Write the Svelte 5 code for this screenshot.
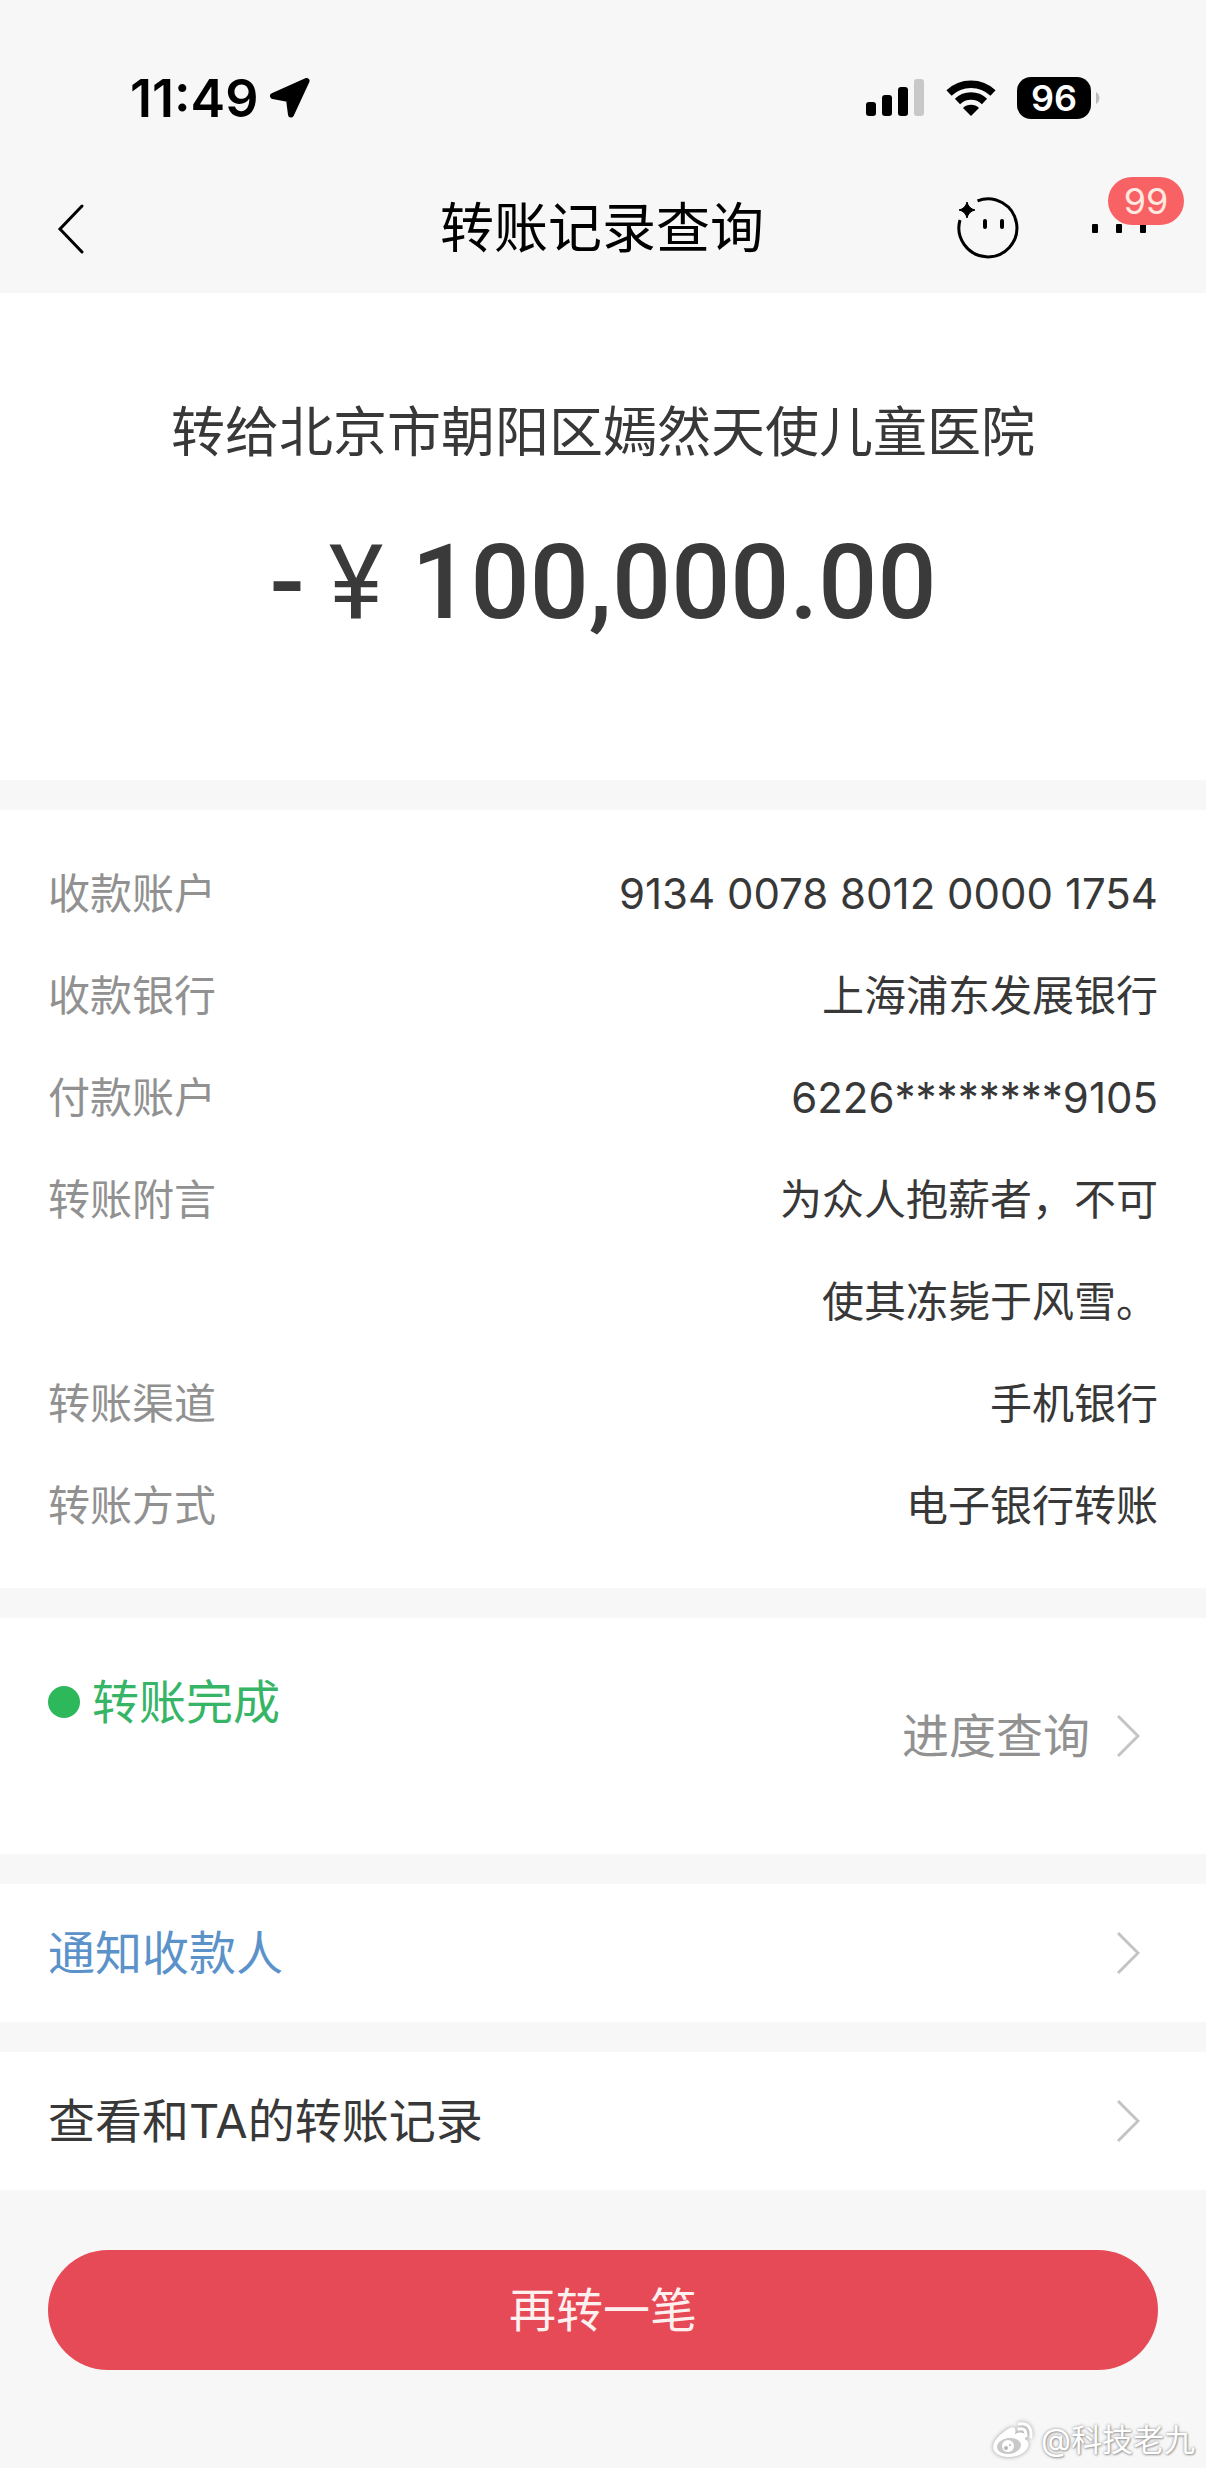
<script>
    const unread = 99;
    const battery = 96;

    const details = [
        { label: '收款账户', value: '9134 0078 8012 0000 1754' },
        { label: '收款银行', value: '上海浦东发展银行' },
        { label: '付款账户', value: '6226********9105' },
        { label: '转账附言', value: '为众人抱薪者，不可使其冻毙于风雪。', wrap: true },
        { label: '转账渠道', value: '手机银行' },
        { label: '转账方式', value: '电子银行转账' }
    ];
</script>

{#snippet chevron()}
    <svg class="chevron" viewBox="0 0 24 44" aria-hidden="true">
        <path d="M2 2 L22 22 L2 42" fill="none" stroke="#c4c4c4" stroke-width="3" />
    </svg>
{/snippet}

<div class="page">
    <header>
        <div class="status-bar">
            <div class="clock">
                <span>11:49</span>
                <svg width="40" height="40" viewBox="0 0 40 40" aria-hidden="true">
                    <path d="M36.500 3 L3 18 L19 21 L21 36.500 Z" stroke="#000" stroke-width="6" stroke-linejoin="round" />
                </svg>
            </div>
            <div class="indicators">
                <svg width="60" height="44" viewBox="0 0 60 44" aria-hidden="true">
                    <rect x="1" y="26" width="10" height="14" rx="3" />
                    <rect x="17" y="19" width="10" height="21" rx="3" />
                    <rect x="33" y="11" width="10" height="29" rx="3" />
                    <rect x="49" y="3" width="10" height="37" rx="3" fill="#c8c8c8" />
                </svg>
                <svg width="52" height="44" viewBox="0 0 52 44" aria-hidden="true">
                    <path d="M4 17 A32 32 0 0 1 48 17" fill="none" stroke="#000" stroke-width="7.500" />
                    <path d="M12.500 25.500 A19.500 19.500 0 0 1 39.500 25.500" fill="none" stroke="#000" stroke-width="7.500" />
                    <path d="M26 40 L18 32 A11.500 11.500 0 0 1 34 32 Z" />
                </svg>
                <div class="battery">
                    <span class="level">{battery}</span>
                    <svg width="9" height="14" viewBox="0 0 9 14" aria-hidden="true">
                        <path d="M3 1 A7 7 0 0 1 3 13 Z" fill="#bdbdbd" />
                    </svg>
                </div>
            </div>
        </div>
        <nav>
            <button class="icon-button back" aria-label="返回">
                <svg width="28" height="52" viewBox="0 0 28 52" aria-hidden="true">
                    <path d="M26 3 L4 26 L26 49" fill="none" stroke="#000" stroke-width="3" stroke-linecap="round" />
                </svg>
            </button>
            <h1>转账记录查询</h1>
            <div class="tools">
                <button class="icon-button" aria-label="客服">
                    <svg width="64" height="64" viewBox="0 0 64 64" aria-hidden="true">
                        <path d="M21.500 3.800 A29 29 0 1 1 4 23" fill="none" stroke="#000" stroke-width="3" />
                        <path d="M11 5 Q12.500 11.500 19 13 Q12.500 14.500 11 21 Q9.500 14.500 3 13 Q9.500 11.500 11 5 Z" stroke="#000" />
                        <rect x="27" y="22" width="4" height="10" rx="2" />
                        <rect x="44" y="22" width="4" height="10" rx="2" />
                    </svg>
                </button>
                <button class="icon-button more" aria-label="更多">
                    <svg width="56" height="10" viewBox="0 0 56 10" aria-hidden="true">
                        <rect width="6" height="9" rx="1" />
                        <rect x="24" width="6" height="9" rx="1" />
                        <rect x="48" width="6" height="9" rx="1" />
                    </svg>
                    <span class="badge">{unread}</span>
                </button>
            </div>
        </nav>
    </header>

    <main>
        <section class="summary">
            <p class="payee">转给北京市朝阳区嫣然天使儿童医院</p>
            <p class="amount"><span>-</span><span class="yen">¥</span><span>100,000.00</span></p>
        </section>

        <dl class="details">
            {#each details as item}
                <div class="row">
                    <dt>{item.label}</dt>
                    <dd class:wrap={item.wrap}>{item.value}</dd>
                </div>
            {/each}
        </dl>

        <section class="progress">
            <div class="state"><span class="dot"></span>转账完成</div>
            <a class="query" href="#progress">进度查询{@render chevron()}</a>
        </section>

        <a class="link notify" href="#notify">通知收款人{@render chevron()}</a>
        <a class="link" href="#history">查看和TA的转账记录{@render chevron()}</a>
    </main>

    <div class="action">
        <button class="again">再转一笔</button>
    </div>

    <footer>
        <svg width="44" height="38" viewBox="0 0 44 38" aria-hidden="true">
            <path d="M17 8 C22 4 26 7 24 13 C31 10 36 12 34 18 C40 21 38 28 32 32 C24 38 9 37 4 31 C-2 24 7 14 17 8 Z" fill="#fff" />
            <ellipse cx="18" cy="25" rx="12" ry="8" fill="#c9c9c9" transform="rotate(-8 18 25)" />
            <circle cx="17" cy="25" r="6" fill="#fff" />
            <circle cx="15" cy="27" r="2" fill="#b5b5b5" />
            <circle cx="19" cy="24" r="1" fill="#b5b5b5" />
            <path d="M28 8 Q35 6 35 15 M28 3 Q41 1 40 16" fill="none" stroke="#fff" stroke-width="3" stroke-linecap="round" />
        </svg>
        <span>@科技老九</span>
    </footer>
</div>

<style>
    :global(body) {
        margin: 0;
        background: #f7f7f7;
    }

    .page {
        font-family: Inter, "Noto Sans CJK SC", sans-serif;
        color: #383838;
        background: #f7f7f7;
        overflow: hidden;
    }

    h1, p, dl, dd {
        margin: 0;
    }

    button {
        font-family: inherit;
        border: none;
        padding: 0;
        cursor: pointer;
    }

    a {
        color: inherit;
        text-decoration: none;
    }

    svg {
        display: block;
        flex: none;
    }

    /* status bar */
    .status-bar {
        display: flex;
        justify-content: space-between;
        align-items: center;
        height: 68px;
        padding: 64px 104px 32px 130px;
        color: #000;
    }

    .clock {
        display: flex;
        align-items: center;
        gap: 12px;
        font-size: 52px;
        font-weight: 600;
    }

    .indicators {
        display: flex;
        align-items: center;
        gap: 20px;
    }

    .battery {
        display: flex;
        align-items: center;
        gap: 2px;
    }

    .level {
        width: 74px;
        height: 42px;
        border-radius: 14px;
        background: #000;
        color: #fff;
        font-size: 36px;
        font-weight: 600;
        line-height: 42px;
        text-align: center;
    }

    /* title bar */
    nav {
        display: grid;
        grid-template-columns: 1fr auto 1fr;
        align-items: center;
        height: 129px;
        padding: 0 58px 0 56px;
    }

    .icon-button {
        background: none;
    }

    .back {
        justify-self: start;
    }

    h1 {
        color: #000;
        font-size: 54px;
        font-weight: 400;
        line-height: 80px;
    }

    .tools {
        display: flex;
        justify-content: flex-end;
        align-items: center;
        gap: 72px;
    }

    .more {
        position: relative;
    }

    .badge {
        position: absolute;
        left: 16px;
        bottom: 9px;
        width: 76px;
        height: 48px;
        border-radius: 24px;
        background: #f96264;
        color: #ffe9e0;
        font-size: 36px;
        line-height: 48px;
    }

    .summary {
        padding: 107px 48px 137px;
        background: #fff;
        text-align: center;
    }

    .payee {
        font-size: 54px;
        line-height: 66px;
    }

    .amount {
        display: flex;
        justify-content: center;
        margin-top: 57px;
        color: #3a3a3a;
        font-family: Roboto, sans-serif;
        font-size: 104px;
        font-weight: 500;
        line-height: 120px;
    }

    .yen {
        margin: 0 28px 0 24px;
        font-weight: 400;
    }

    .details {
        margin-top: 30px;
        padding: 33px 48px 31px;
        background: #fff;
        font-size: 42px;
        line-height: 102px;
    }

    .row {
        display: flex;
        justify-content: space-between;
    }

    dt {
        color: #919191;
    }

    dd {
        text-align: right;
    }

    .wrap {
        max-width: 400px;
    }

    .progress {
        display: flex;
        justify-content: space-between;
        align-items: center;
        margin-top: 30px;
        padding: 48px 66px 48px 48px;
        background: #fff;
        font-size: 47px;
        line-height: 74px;
    }

    .state {
        display: flex;
        align-items: center;
        gap: 12px;
        height: 72px;
        margin-bottom: 68px;
        color: #35b565;
    }

    .dot {
        width: 32px;
        height: 32px;
        border-radius: 50%;
        background: #2eb85c;
    }

    .query {
        display: flex;
        align-items: center;
        gap: 26px;
        color: #919191;
    }

    .chevron {
        width: 24px;
        height: 44px;
    }

    .link {
        display: flex;
        justify-content: space-between;
        align-items: center;
        height: 138px;
        margin-top: 30px;
        padding: 0 66px 0 48px;
        background: #fff;
        font-size: 47px;
        line-height: 74px;
    }

    .notify {
        color: #5b92c9;
    }

    .action {
        padding: 60px 48px 48px;
    }

    .again {
        display: block;
        width: 100%;
        height: 120px;
        border-radius: 60px;
        background: #e64a57;
        color: #fff0f0;
        font-size: 47px;
        line-height: 74px;
    }

    footer {
        display: flex;
        justify-content: flex-end;
        align-items: center;
        gap: 6px;
        height: 44px;
        padding: 0 11px 6px;
        color: #fff;
        font-size: 31px;
        line-height: 44px;
        text-shadow: 0 0 3px #888, 1px 1px 2px #aaa;
    }

    footer svg {
        filter: drop-shadow(0 0 2px #999);
    }
</style>
